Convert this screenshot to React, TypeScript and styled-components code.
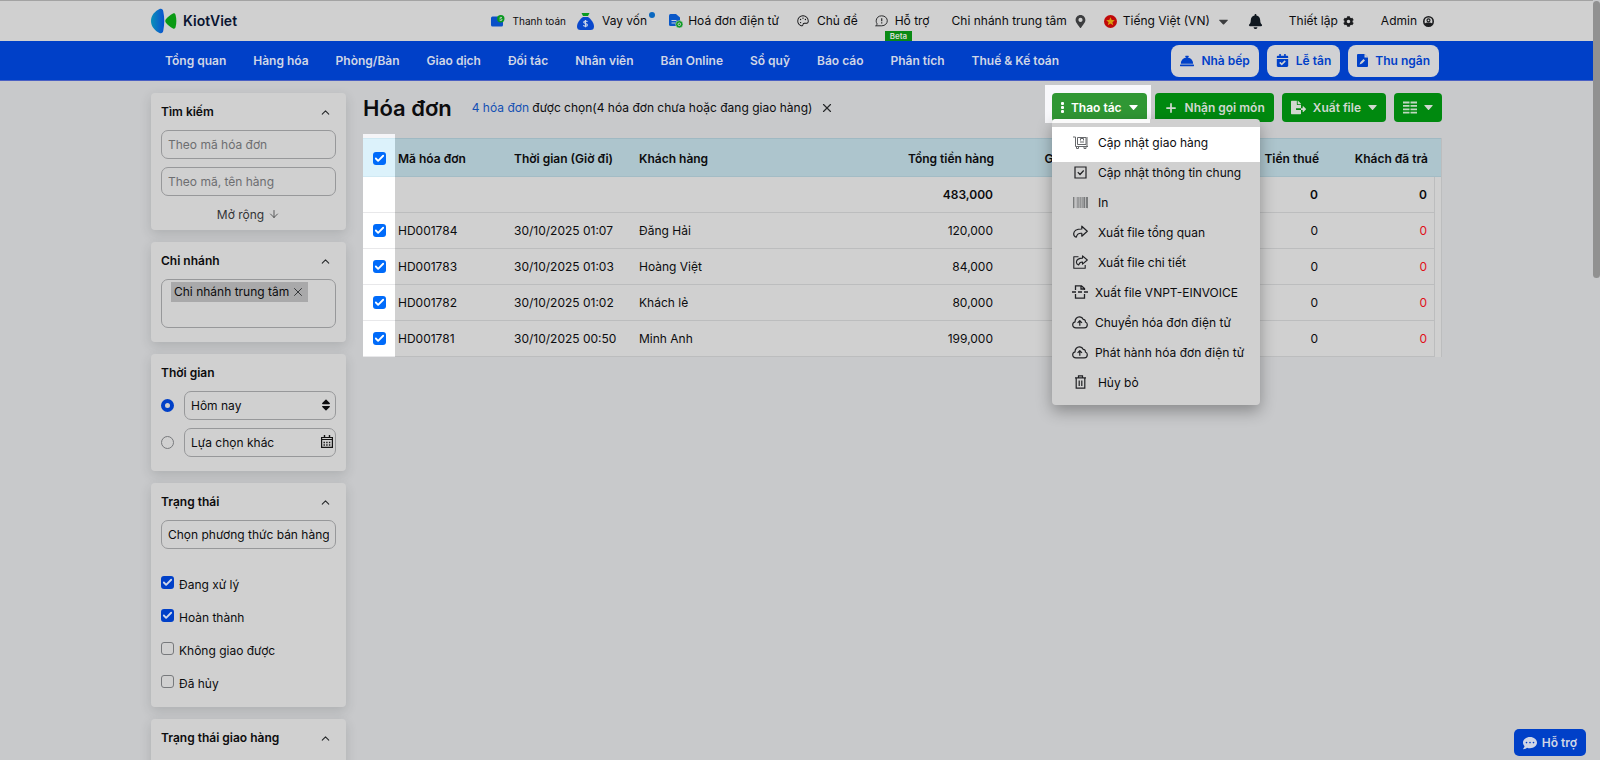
import React from "react";
import styled, { createGlobalStyle, css } from "styled-components";
import { Check, ChevronUp, X, ArrowDown, Plus } from "lucide-react";
import {
  FaBarcode,
  FaBell,
  FaCalendarCheck,
  FaCaretDown,
  FaCog,
  FaCommentDots,
  FaConciergeBell,
  FaFileExport,
  FaMapMarkerAlt,
  FaSort,
} from "react-icons/fa";
import { PiPalette } from "react-icons/pi";

const color = {
  page: "#c8c9cb",
  surface: "#d0d0d0",
  blue: "#0040c8",
  green: "#00890f",
  text: "#0c0c0e",
  line: "#bcbdbe",
  field: "#97989a",
  head: "#adc5cd",
};

const GlobalStyle = createGlobalStyle`
  *, *::before, *::after { box-sizing: border-box; }
  body { margin: 0; background: ${color.page}; }
  body, button, input, select, textarea {
    font-family: Inter, "Liberation Sans", sans-serif;
    font-size: 12px;
    color: ${color.text};
  }
  button { cursor: pointer; }
  a { color: inherit; text-decoration: none; }
`;

const Shell = styled.div`
  position: relative;
  height: 100vh;
  padding-right: 7px;
  overflow: hidden auto;
  scrollbar-width: none;
  line-height: 16px;
`;

const ScrollThumb = styled.div`
  position: fixed;
  top: 1px;
  right: 0;
  width: 7px;
  height: 277px;
  border-radius: 4px;
  background: #919191;
`;

const Inner = styled.div`
  display: flex;
  align-items: center;
  width: 100%;
  max-width: 1291px;
  height: 100%;
  margin: 0 auto;
`;

/* Top bar */

const TopBar = styled.header`
  height: 41px;
  border-top: 1px solid #a3a3a3;
  background: ${color.surface};
`;

const TopItems = styled(Inner)`
  padding-right: 8px;
`;

const Brand = styled.a`
  display: flex;
  align-items: center;
  gap: 6px;
  margin-right: auto;
  font-size: 14px;
  font-weight: 600;
  color: #0a1430;
`;

const TopItem = styled.a<{ $gap?: number; $before?: number; $small?: boolean }>`
  position: relative;
  display: flex;
  align-items: center;
  gap: ${(p) => p.$gap ?? 7}px;
  margin-left: ${(p) => p.$before ?? 17}px;
  font-size: ${(p) => (p.$small ? 10 : 12)}px;
  white-space: nowrap;
  svg { flex: none; }
`;

const Dot = styled.i`
  position: absolute;
  top: -1px;
  right: -8px;
  width: 6px;
  height: 6px;
  border-radius: 50%;
  background: #0a68c0;
`;

const Beta = styled.span`
  position: absolute;
  top: 18px;
  left: 10px;
  padding: 0 5px;
  background: #0a8a14;
  color: #d6dcd6;
  font-size: 8px;
  font-weight: 600;
  line-height: 10px;
`;

/* Navigation */

const NavBar = styled.nav`
  height: 40px;
  border-bottom: 1px solid #4a60c4;
  background: ${color.blue};
`;

const NavLinks = styled.div`
  display: flex;
  gap: 27px;
  margin-right: auto;
  padding-left: 14px;
  color: #d0d6e6;
  font-weight: 600;
  white-space: nowrap;
`;

const NavActions = styled.div`
  display: flex;
  gap: 8px;
  padding-right: 3px;
`;

const NavButton = styled.button`
  display: flex;
  align-items: center;
  gap: 7px;
  height: 32px;
  padding: 0 9px;
  border: 0;
  border-radius: 8px;
  background: #d0d1d4;
  color: ${color.blue};
  font-weight: 600;
  white-space: nowrap;
`;

/* Body */

const Body = styled.div`
  display: flex;
  align-items: flex-start;
  gap: 17px;
  width: 100%;
  max-width: 1291px;
  margin: 0 auto;
  padding-top: 12px;
`;

const Sidebar = styled.aside`
  display: flex;
  flex: none;
  flex-direction: column;
  gap: 12px;
  width: 195px;
`;

const Card = styled.section<{ $tight?: boolean }>`
  padding: 10px 10px ${(p) => (p.$tight ? 6 : 14)}px;
  border-radius: 4px;
  background: ${color.surface};
  box-shadow: 0 4px 12px rgba(40, 42, 46, 0.16);
`;

const CardHead = styled.div`
  display: flex;
  align-items: center;
  justify-content: space-between;
  height: 18px;
  margin-bottom: 9px;
  padding-right: 4px;
`;

const CardTitle = styled.h2`
  margin: 0;
  font-size: 12px;
  font-weight: 600;
`;

const IconButton = styled.button`
  display: flex;
  padding: 0;
  border: 0;
  background: none;
  color: #26282a;
`;

const Fields = styled.div`
  display: flex;
  flex-direction: column;
  gap: 8px;
`;

const fieldBox = css`
  width: 100%;
  min-width: 0;
  height: 29px;
  padding: 0 6px;
  border: 1px solid ${color.field};
  border-radius: 7px;
  background: transparent;
  outline: 0;
`;

const TextInput = styled.input<{ $strong?: boolean }>`
  ${fieldBox}
  &::placeholder { color: ${(p) => (p.$strong ? color.text : "#6d6e70")}; opacity: 1; }
`;

const Select = styled.select`
  ${fieldBox}
  appearance: none;
`;

const Expand = styled.button`
  display: flex;
  align-items: center;
  justify-content: center;
  gap: 4px;
  width: 100%;
  height: 20px;
  margin-top: 8px;
  padding: 0;
  border: 0;
  background: none;
  color: #333436;
`;

const TagBox = styled.div`
  height: 49px;
  padding: 2px 9px;
  border: 1px solid ${color.field};
  border-radius: 7px;
`;

const Tag = styled.span`
  display: inline-flex;
  align-items: center;
  gap: 2px;
  height: 20px;
  padding: 0 3px;
  background: #a9a9aa;
  white-space: nowrap;
`;

const TimeRow = styled.div`
  display: flex;
  align-items: center;
  gap: 10px;
`;

const Radio = styled.input`
  flex: none;
  width: 13px;
  height: 13px;
  margin: 0;
  border: 1px solid #77797c;
  border-radius: 50%;
  appearance: none;
  &:checked { border: 4px solid ${color.blue}; }
`;

const FieldWrap = styled.div`
  position: relative;
  flex: 1;
  min-width: 0;
`;

const FieldIcon = styled.span`
  position: absolute;
  top: 0;
  right: 3px;
  display: flex;
  align-items: center;
  height: 27px;
  pointer-events: none;
`;

const CheckList = styled.div`
  margin-top: 17px;
  margin-bottom: -5px;
`;

const CheckLabel = styled.label`
  display: flex;
  align-items: center;
  gap: 5px;
  height: 33px;
`;

const CheckText = styled.span`
  padding-top: 4px;
`;

const CheckWrap = styled.span<{ $bright?: boolean }>`
  display: inline-grid;
  flex: none;
  width: 13px;
  height: 13px;
  color: ${(p) => (p.$bright ? "#fff" : "#d0d8ea")};
  > * { grid-area: 1 / 1; pointer-events: none; }
  svg { width: 11px; height: 11px; margin: 1px; visibility: hidden; }
  input {
    width: 13px;
    height: 13px;
    margin: 0;
    border: 1px solid #77797c;
    border-radius: 3px;
    appearance: none;
    pointer-events: auto;
  }
  input:checked { border: 0; background: ${(p) => (p.$bright ? "#006bfa" : color.blue)}; }
  input:checked + svg { visibility: visible; }
`;

/* Main column */

const Main = styled.main`
  flex: 1;
  min-width: 0;
`;

const Toolbar = styled.div`
  display: flex;
  align-items: center;
  height: 29px;
  margin-bottom: 16px;
`;

const Title = styled.h1`
  margin: 0 20px 0 0;
  font-size: 22px;
  font-weight: 600;
  line-height: 28px;
  white-space: nowrap;
`;

const Selected = styled.p`
  display: flex;
  align-items: center;
  gap: 8px;
  margin: 0 auto 0 0;
  white-space: nowrap;
  a { color: #1450b4; }
`;

const Actions = styled.div`
  display: flex;
  gap: 8px;
`;

const MenuAnchor = styled.div`
  position: relative;
  z-index: 2;
`;

const Spotlight = styled.div`
  position: absolute;
  inset: -8px -4px -1px -7px;
  background: #f8f8fb;
`;

const ActionButton = styled.button<{ $active?: boolean }>`
  position: relative;
  display: flex;
  align-items: center;
  gap: 7px;
  height: 29px;
  padding: 0 9px;
  border: 0;
  border-radius: 4px;
  background: ${(p) => (p.$active ? "#309734" : color.green)};
  color: ${(p) => (p.$active ? "#fff" : "#d0d8d0")};
  font-weight: 600;
  white-space: nowrap;
  svg { flex: none; }
`;

const Menu = styled.ul`
  position: absolute;
  top: 26px;
  left: 0;
  width: 208px;
  margin: 0;
  padding: 8px 0;
  border-radius: 4px;
  background: ${color.surface};
  box-shadow: 0 6px 16px rgba(0, 0, 0, 0.32);
  list-style: none;
  &::before {
    content: "";
    position: absolute;
    top: 0;
    left: 0;
    width: 98px;
    height: 4px;
    border-radius: 4px 0 0;
    background: #fafafa;
  }
`;

const MenuItem = styled.li<{ $lit?: boolean }>`
  position: relative;
  height: 30px;
  z-index: ${(p) => (p.$lit ? 0 : 1)};
  ${(p) =>
    p.$lit &&
    css`
      &::before {
        content: "";
        position: absolute;
        inset: 0 0 -5px;
        background: #fff;
      }
    `}
`;

const MenuButton = styled.button<{ $wide?: boolean }>`
  position: relative;
  display: flex;
  align-items: center;
  gap: ${(p) => (p.$wide ? 7 : 10)}px;
  width: 100%;
  height: 30px;
  padding: 0 0 0 ${(p) => (p.$wide ? 20 : 21)}px;
  border: 0;
  background: none;
  white-space: nowrap;
  svg { flex: none; }
`;

/* Invoice table */

const TableWrap = styled.div`
  position: relative;
`;

const ColumnSpotlight = styled.div`
  position: absolute;
  top: -4px;
  left: 0;
  width: 32px;
  height: 4px;
  background: #f5f5f8;
`;

const Table = styled.table`
  width: 100%;
  border-collapse: separate;
  border-spacing: 0;
  table-layout: fixed;
  background: ${color.surface};
  border-right: 1px solid ${color.line};
`;

const Col = styled.col<{ $w?: number }>`
  width: ${(p) => (p.$w ? `${p.$w}px` : "auto")};
`;

const Th = styled.th<{ $right?: boolean; $lit?: boolean }>`
  height: 39px;
  padding: 2px 6px 0 3px;
  border-top: 1px solid #9fb9c3;
  border-bottom: 1px solid #a3bcc5;
  background: ${(p) => (p.$lit ? "#dcf2fb" : color.head)};
  font-weight: 600;
  text-align: ${(p) => (p.$right ? "right" : "left")};
  white-space: nowrap;
`;

const Td = styled.td<{ $right?: boolean; $bold?: boolean; $red?: boolean }>`
  height: 36px;
  padding: 0 7px 0 3px;
  border-bottom: 1px solid ${color.line};
  color: ${(p) => (p.$red ? "#e01018" : color.text)};
  font-weight: ${(p) => (p.$bold ? 600 : 400)};
  text-align: ${(p) => (p.$right ? "right" : "left")};
  white-space: nowrap;
`;

const CheckCell = styled(Td)`
  padding: 0 0 0 10px;
  border-color: #e8e8ea;
  background: #fff;
  line-height: 0;
`;

const CheckHead = styled(Th)`
  padding: 2px 0 0 10px;
  border-color: #d0e9f3;
  line-height: 0;
`;

const Gutter = styled.td`
  padding: 0;
  border-left: 1px solid ${color.line};
`;

const SupportButton = styled.button`
  position: fixed;
  right: 14px;
  bottom: 4px;
  display: flex;
  align-items: center;
  gap: 5px;
  height: 27px;
  padding: 0 9px;
  border: 0;
  border-radius: 5px;
  background: ${color.blue};
  color: #d0d6e6;
  font-weight: 600;
`;

/* Icons */

const Logo = () => (
  <svg width="26" height="26" viewBox="0 0 26 26" aria-hidden="true">
    <defs>
      <linearGradient id="logoBlue" x1="0" x2="1">
        <stop offset="0" stopColor="#0a90b8" />
        <stop offset="1" stopColor="#0a50d0" />
      </linearGradient>
    </defs>
    <path d="M9 .8C11 .4 12 1.500 12.300 3.500c1.300 6 1.300 13 0 19C12 24.500 11 25.600 9 25.200 4 23 0 18.500 0 13S4 3 9 .8z" fill="url(#logoBlue)" />
    <path d="M22 5.600c1.400-.6 2.200 0 2.600 1.400 1 4 1 8 0 12-.4 1.400-1.200 2-2.600 1.400-3-1.600-5.400-3.600-7.300-6-.6-.9-.6-1.900 0-2.800 1.900-2.400 4.300-4.400 7.300-6z" fill="#0a9a14" />
  </svg>
);

const PaymentIcon = () => (
  <svg width="14" height="12" viewBox="0 0 14 12" aria-hidden="true">
    <path d="M1.500 1.500H7L12 7v3q0 1.500-1.500 1.500h-9Q0 11.500 0 10V3q0-1.500 1.500-1.500z" fill="#0a50c8" />
    <circle cx="9.800" cy="3.800" r="3.700" fill="#0a9a20" />
    <path d="M11 2.500Q8.600 1.900 8.800 3.200c.2 1 2.200.4 2.200 1.500S9 5.600 8.500 5" fill="none" stroke="#d0d0d0" strokeWidth=".9" />
  </svg>
);

const LoanIcon = () => (
  <svg width="17" height="17" viewBox="0 0 17 17" aria-hidden="true">
    <path d="M4.500 0h8L11 3H6z" fill="#0a9a20" />
    <path d="M6 4h5c3 2 6 6 6 9.500Q17 17 13.500 17h-10Q0 17 0 13.500C0 10 3 6 6 4z" fill="#0a48cc" />
    <path d="M10.500 8.700Q9.900 8 8.500 8 6.700 8 6.700 9.300c0 1.600 3.700.9 3.700 2.600Q10.400 13.200 8.500 13.200q-1.500 0-2.200-.9M8.500 7v7.300" fill="none" stroke="#d0d8ea" strokeWidth="1.100" />
  </svg>
);

const EInvoiceIcon = () => (
  <svg width="14" height="14" viewBox="0 0 14 14" aria-hidden="true">
    <path d="M1.500 0H7l4 3.500V12H1.500Q0 12 0 10.500v-9Q0 0 1.500 0z" fill="#0a58c8" />
    <path d="M2.500 6.500h5M2.500 9h4" stroke="#c4cde0" />
    <circle cx="10.300" cy="10.300" r="3.700" fill="#0a9a20" stroke={color.surface} strokeWidth=".6" />
    <circle cx="10.300" cy="10.300" r="1.300" fill="none" stroke="#d0d0d0" />
  </svg>
);

const HelpIcon = () => (
  <svg width="13" height="12" viewBox="0 0 13 12" fill="none" stroke="#2c2d2f" aria-hidden="true">
    <path d="M.6 10.800h6.100c3.300 0 5.600-2.300 5.600-5S10 .8 6.700.8 1.200 3 1.200 5.800c0 1.400.3 2.400 1.200 3.400z" />
    <path d="M6.700 3.200v3M6.700 7.300v1.200" strokeWidth="1.200" />
  </svg>
);

const FlagIcon = () => (
  <svg width="13" height="13" viewBox="0 0 13 13" aria-hidden="true">
    <circle cx="6.500" cy="6.500" r="6.500" fill="#c00a0a" />
    <path d="M6.500 2.200l1.200 2.900 3.100.2-2.400 2 .8 3-2.700-1.700-2.700 1.700.8-3-2.400-2 3.100-.2z" fill="#d8a010" />
  </svg>
);

const UserIcon = () => (
  <svg width="11" height="11" viewBox="0 0 11 11" aria-hidden="true">
    <circle cx="5.500" cy="5.500" r="4.700" fill="none" stroke="#1c1d1f" strokeWidth="1.600" />
    <circle cx="5.500" cy="4.300" r="1.500" fill="none" stroke="#1c1d1f" strokeWidth="1.200" />
    <path d="M1.500 7.800c1.500-1.800 6.500-1.800 8 0L8 10H3z" fill="#1c1d1f" />
  </svg>
);

const CashierIcon = () => (
  <svg width="11" height="13" viewBox="0 0 11 13" aria-hidden="true">
    <path d="M1 0h6.500L11 3.500V12q0 1-1 1H1q-1 0-1-1V1q0-1 1-1z" fill="#0040c8" />
    <path d="M7.500 0v3.500H11M2.500 10.500l1-2.500 3-3 1.500 1.500-3 3z" fill="#d0d1d4" />
  </svg>
);

const CaretIcon = () => (
  <svg width="9" height="5" viewBox="0 0 9 5" fill="currentColor" aria-hidden="true">
    <path d="M.8 0h7.400q.9 0 .3.800L5 4.700q-.5.500-1 0L.5.8Q-.1 0 .8 0z" />
  </svg>
);

const DotsIcon = () => (
  <svg width="3" height="11" viewBox="0 0 3 11" fill="currentColor" aria-hidden="true">
    <rect width="3" height="3" rx="1" />
    <rect y="4" width="3" height="3" rx="1" />
    <rect y="8" width="3" height="3" rx="1" />
  </svg>
);

const CalendarIcon = () => (
  <svg width="12" height="13" viewBox="0 0 12 13" fill="none" stroke="#141414" aria-hidden="true">
    <path d="M.6 2.500h10.800v9.900H.6z M.6 4.500h10.800" strokeWidth="1.200" />
    <path d="M3.500 0v3M8.500 0v3" strokeWidth="1.400" />
    <path d="M2.500 7.500h7M2.500 10h7" strokeWidth="1.300" strokeDasharray="1.400 1.300" />
  </svg>
);

const ListIcon = () => (
  <svg width="14" height="13" viewBox="0 0 14 13" stroke="#c0d8c0" strokeWidth="1.800" aria-hidden="true">
    <path d="M0 1.500h6.500M7.500 1.500h6.500M0 4.900h6.500M7.500 4.900h6.500M0 8.300h6.500M7.500 8.300h6.500M0 11.700h6.500M7.500 11.700h6.500" />
  </svg>
);

const DeliveryIcon = () => (
  <svg width="15" height="13" viewBox="0 0 15 13" fill="none" stroke="#66686b" aria-hidden="true">
    <path d="M0 1h2.500v9.500H15M4.500 1.500h8.500v7H4.500z" />
    <path d="M7.500 4.500v-2h3v2M7 6h4" />
    <path d="M3.500 10.500v2h2v-2M11 10.500v2h2v-2M14 1v9.500" />
  </svg>
);

const CheckSquareIcon = () => (
  <svg width="15" height="13" viewBox="0 0 15 13" fill="none" stroke="#202124" strokeWidth="1.200" aria-hidden="true">
    <path d="M2 1h11v11H2z M4.800 6.200l2.200 2.300 3.700-4" />
  </svg>
);

const ShareIcon = () => (
  <svg width="15" height="14" viewBox="0 0 15 14" fill="none" stroke="#202124" strokeWidth="1.200" strokeLinejoin="round" aria-hidden="true">
    <path d="M8.800 1.200l5.500 5-5.500 5V8.300C5.500 8 4 9 3.300 12.200 1.500 11.500.6 10 .7 8.600.9 5.500 4 4 8.800 4z" />
  </svg>
);

const ShareSquareIcon = () => (
  <svg width="15" height="14" viewBox="0 0 15 14" fill="none" stroke="#202124" strokeWidth="1.100" strokeLinejoin="round" aria-hidden="true">
    <path d="M5.500 1.800H.8v11.400h11.400V10" />
    <path d="M9.500.8l4.800 4.200-4.800 4.200V7C7 6.900 6.300 7.800 5.600 10 4 9.300 3.300 8.300 3.400 7c.2-2.500 2.500-3.800 6.100-3.900z" />
  </svg>
);

const FileSplitIcon = () => (
  <svg width="16" height="14" viewBox="0 0 16 14" fill="none" stroke="#202124" strokeWidth="1.300" aria-hidden="true">
    <path d="M3.500 5V.8h6l3 2.700V5M9 .8V4h3.500M3.500 9v4.200h9V9" />
    <path d="M0 7h4M6 7h4M12 7h4" />
  </svg>
);

const CloudIcon = () => (
  <svg width="16" height="13" viewBox="0 0 16 13" fill="none" stroke="#202124" strokeWidth="1.200" strokeLinejoin="round" aria-hidden="true">
    <path d="M4 11.800C2 11.800.7 10.500.7 8.800c0-1.500 1-2.600 2.300-2.900C3 2.800 5 .9 7.300.9c1.900 0 3.200 1 3.800 2.500 1.600 0 2.500 1.200 2.300 2.600 1.200.4 1.900 1.400 1.900 2.700 0 1.800-1.300 3.100-3 3.100z" />
    <path d="M7.800 9.800V4.800M5.600 6.800l2.200-2.200L10 6.800" />
  </svg>
);

const TrashIcon = () => (
  <svg width="15" height="14" viewBox="0 0 15 14" fill="none" stroke="#202124" strokeWidth="1.200" aria-hidden="true">
    <path d="M2 2.800h11M5.500 2.500V.8h4v1.700M3.200 2.800v10.400h8.600V2.800M6.200 5.500v5.500M8.800 5.500v5.500" />
  </svg>
);

/* Data */

const navItems = [
  "Tổng quan", "Hàng hóa", "Phòng/Bàn", "Giao dịch", "Đối tác", "Nhân viên",
  "Bán Online", "Sổ quỹ", "Báo cáo", "Phân tích", "Thuế & Kế toán",
];

const invoices = [
  { id: "HD001784", time: "30/10/2025 01:07", customer: "Đăng Hải", total: "120,000" },
  { id: "HD001783", time: "30/10/2025 01:03", customer: "Hoàng Việt", total: "84,000" },
  { id: "HD001782", time: "30/10/2025 01:02", customer: "Khách lẻ", total: "80,000" },
  { id: "HD001781", time: "30/10/2025 00:50", customer: "Minh Anh", total: "199,000" },
];

const menuItems = [
  { label: "Cập nhật giao hàng", icon: <DeliveryIcon />, lit: true },
  { label: "Cập nhật thông tin chung", icon: <CheckSquareIcon /> },
  { label: "In", icon: <FaBarcode size={15} color="#5c5e60" /> },
  { label: "Xuất file tổng quan", icon: <ShareIcon /> },
  { label: "Xuất file chi tiết", icon: <ShareSquareIcon /> },
  { label: "Xuất file VNPT-EINVOICE", icon: <FileSplitIcon />, wide: true },
  { label: "Chuyển hóa đơn điện tử", icon: <CloudIcon />, wide: true },
  { label: "Phát hành hóa đơn điện tử", icon: <CloudIcon />, wide: true },
  { label: "Hủy bỏ", icon: <TrashIcon /> },
];

const statuses = [
  { label: "Đang xử lý", on: true },
  { label: "Hoàn thành", on: true },
  { label: "Không giao được", on: false },
  { label: "Đã hủy", on: false },
];

const CheckBox = ({ bright, on = true, label }: { bright?: boolean; on?: boolean; label?: string }) => (
  <CheckWrap $bright={bright}>
    <input type="checkbox" defaultChecked={on} aria-label={label} />
    <Check strokeWidth={4} aria-hidden="true" />
  </CheckWrap>
);

const FilterHead = ({ title, fixed }: { title: string; fixed?: boolean }) => (
  <CardHead>
    <CardTitle>{title}</CardTitle>
    {!fixed && (
      <IconButton aria-label={title}>
        <ChevronUp size={13} strokeWidth={2} />
      </IconButton>
    )}
  </CardHead>
);

export default function App() {
  return (
    <Shell>
      <GlobalStyle />
      <TopBar>
        <TopItems>
          <Brand href="#"><Logo />KiotViet</Brand>
          <TopItem href="#" $small $gap={8}><PaymentIcon />Thanh toán</TopItem>
          <TopItem href="#" $gap={8} $before={11}><LoanIcon />Vay vốn<Dot /></TopItem>
          <TopItem href="#" $gap={5} $before={22}><EInvoiceIcon />Hoá đơn điện tử</TopItem>
          <TopItem href="#"><PiPalette size={14} />Chủ đề</TopItem>
          <TopItem href="#"><HelpIcon />Hỗ trợ<Beta>Beta</Beta></TopItem>
          <TopItem href="#" $before={22}>Chi nhánh trung tâm<FaMapMarkerAlt size={13} color="#3c3d3f" /></TopItem>
          <TopItem href="#" $gap={6}><FlagIcon />Tiếng Việt (VN)<FaCaretDown size={15} color="#3c3d3f" /></TopItem>
          <TopItem href="#" aria-label="Bell"><FaBell size={15} color="#101820" /></TopItem>
          <TopItem href="#" $gap={5} $before={26}>Thiết lập<FaCog size={11} color="#1c1d1f" /></TopItem>
          <TopItem href="#" $gap={6} $before={27}>Admin<UserIcon /></TopItem>
        </TopItems>
      </TopBar>
      <NavBar>
        <Inner>
          <NavLinks>
            {navItems.map((n) => <a href="#" key={n}>{n}</a>)}
          </NavLinks>
          <NavActions>
            <NavButton><FaConciergeBell size={14} />Nhà bếp</NavButton>
            <NavButton><FaCalendarCheck size={13} />Lễ tân</NavButton>
            <NavButton><CashierIcon />Thu ngân</NavButton>
          </NavActions>
        </Inner>
      </NavBar>

      <Body>
        <Sidebar>
          <Card $tight>
            <FilterHead title="Tìm kiếm" />
            <Fields>
              <TextInput placeholder="Theo mã hóa đơn" aria-label="Theo mã hóa đơn" />
              <TextInput placeholder="Theo mã, tên hàng" aria-label="Theo mã, tên hàng" />
            </Fields>
            <Expand>Mở rộng <ArrowDown size={12} strokeWidth={1.5} /></Expand>
          </Card>
          <Card>
            <FilterHead title="Chi nhánh" />
            <TagBox><Tag>Chi nhánh trung tâm<IconButton aria-label="Chi nhánh trung tâm"><X size={14} strokeWidth={1.5} /></IconButton></Tag></TagBox>
          </Card>
          <Card>
            <FilterHead title="Thời gian" fixed />
            <Fields>
              <TimeRow>
                <Radio type="radio" name="time" defaultChecked aria-label="Hôm nay" />
                <FieldWrap>
                  <Select aria-label="Thời gian"><option>Hôm nay</option></Select>
                  <FieldIcon><FaSort size={14} /></FieldIcon>
                </FieldWrap>
              </TimeRow>
              <TimeRow>
                <Radio type="radio" name="time" aria-label="Lựa chọn khác" />
                <FieldWrap>
                  <TextInput $strong placeholder="Lựa chọn khác" aria-label="Lựa chọn khác" />
                  <FieldIcon><CalendarIcon /></FieldIcon>
                </FieldWrap>
              </TimeRow>
            </Fields>
          </Card>
          <Card>
            <FilterHead title="Trạng thái" />
            <TextInput $strong placeholder="Chọn phương thức bán hàng" aria-label="Chọn phương thức bán hàng" />
            <CheckList>
              {statuses.map((s) => (
                <CheckLabel key={s.label}><CheckBox on={s.on} /><CheckText>{s.label}</CheckText></CheckLabel>
              ))}
            </CheckList>
          </Card>
          <Card>
            <FilterHead title="Trạng thái giao hàng" />
          </Card>
        </Sidebar>

        <Main>
          <Toolbar>
            <Title>Hóa đơn</Title>
            <Selected>
              <span><a href="#">4 hóa đơn</a> được chọn(4 hóa đơn chưa hoặc đang giao hàng)</span>
              <IconButton aria-label="X"><X size={14} strokeWidth={2} /></IconButton>
            </Selected>
            <Actions>
              <MenuAnchor>
                <Spotlight />
                <ActionButton $active><DotsIcon />Thao tác<CaretIcon /></ActionButton>
                <Menu>
                  {menuItems.map((m) => (
                    <MenuItem key={m.label} $lit={m.lit}>
                      <MenuButton $wide={m.wide}>{m.icon}{m.label}</MenuButton>
                    </MenuItem>
                  ))}
                </Menu>
              </MenuAnchor>
              <ActionButton><Plus size={14} strokeWidth={3} />Nhận gọi món</ActionButton>
              <ActionButton><FaFileExport size={15} />Xuất file<CaretIcon /></ActionButton>
              <ActionButton aria-label="List"><ListIcon /><CaretIcon /></ActionButton>
            </Actions>
          </Toolbar>

          <TableWrap>
            <ColumnSpotlight />
            <Table>
              <colgroup>
                <Col $w={32} /><Col $w={116} /><Col $w={125} /><Col /><Col $w={121} />
                <Col $w={101} /><Col $w={224} /><Col $w={109} /><Col $w={7} />
              </colgroup>
              <thead>
                <tr>
                  <CheckHead $lit><CheckBox bright label="Mã hóa đơn" /></CheckHead>
                  <Th>Mã hóa đơn</Th>
                  <Th>Thời gian (Giờ đi)</Th>
                  <Th>Khách hàng</Th>
                  <Th $right>Tổng tiền hàng</Th>
                  <Th $right>Giảm giá</Th>
                  <Th $right>Tiền thuế</Th>
                  <Th $right>Khách đã trả</Th>
                  <Th />
                </tr>
              </thead>
              <tbody>
                <tr>
                  <CheckCell /><Td /><Td /><Td />
                  <Td $right $bold>483,000</Td>
                  <Td />
                  <Td $right $bold>0</Td>
                  <Td $right $bold>0</Td>
                  <Gutter />
                </tr>
                {invoices.map((v) => (
                  <tr key={v.id}>
                    <CheckCell><CheckBox bright label={v.id} /></CheckCell>
                    <Td>{v.id}</Td>
                    <Td>{v.time}</Td>
                    <Td>{v.customer}</Td>
                    <Td $right>{v.total}</Td>
                    <Td />
                    <Td $right>0</Td>
                    <Td $right $red>0</Td>
                    <Gutter />
                  </tr>
                ))}
              </tbody>
            </Table>
          </TableWrap>
        </Main>
      </Body>

      <ScrollThumb />
      <SupportButton><FaCommentDots size={14} />Hỗ trợ</SupportButton>
    </Shell>
  );
}
